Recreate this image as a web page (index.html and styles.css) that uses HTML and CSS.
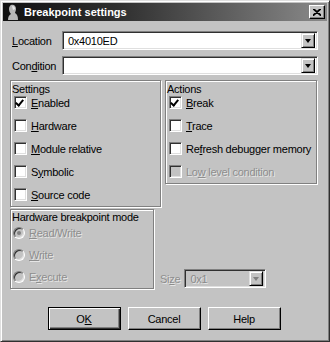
FILE: index.html
```html
<!DOCTYPE html>
<html>
  <head>
    <title>Breakpoint settings</title>
    <link rel="stylesheet" href="styles.css">
  </head>
  <body>
    <div class="window">
      <div class="titlebar">
        <svg class="app-icon" width="14" height="16" viewBox="0 0 14 16">
          <path d="M5 1 C8 0 10 2 10 5 C10 7 9 8 9 9 C11 10 12 12 12 16 L2 16 C2 13 3 11 5 10 C4 9 3 7 3 5 C3 3 4 1.5 5 1 Z" fill="#b8b8b8"/>
          <path d="M6 2 C8 2 9 3 9 5 L7 6 Z" fill="#e8e8e8"/>
        </svg>
        <span class="title">Breakpoint settings</span>
        <span class="close">
          <svg width="8" height="7" viewBox="0 0 8 7">
            <path d="M0 0 L8 7 M1 0 L8 6 M8 0 L0 7 M7 0 L0 6" stroke="#000" stroke-width="1.2"/>
          </svg>
        </span>
      </div>

      <div class="content">
        <div class="field-row">
          <span class="field-label"><u>L</u>ocation</span>
          <div class="combo">
            <span class="combo-text">0x4010ED</span>
            <span class="combo-btn"><span class="arrow"></span></span>
          </div>
        </div>
        <div class="field-row">
          <span class="field-label">Con<u>d</u>ition</span>
          <div class="combo">
            <span class="combo-text"></span>
            <span class="combo-btn"><span class="arrow"></span></span>
          </div>
        </div>

        <div class="groups">
          <div class="group settings">
            <div class="group-title">Settings</div>
            <div class="check-row"><span class="box checked"></span><span><u>E</u>nabled</span></div>
            <div class="check-row"><span class="box"></span><span><u>H</u>ardware</span></div>
            <div class="check-row"><span class="box"></span><span><u>M</u>odule relative</span></div>
            <div class="check-row"><span class="box"></span><span>S<u>y</u>mbolic</span></div>
            <div class="check-row"><span class="box"></span><span><u>S</u>ource code</span></div>
          </div>
          <div class="group actions">
            <div class="group-title">Actions</div>
            <div class="check-row"><span class="box checked"></span><span><u>B</u>reak</span></div>
            <div class="check-row"><span class="box"></span><span><u>T</u>race</span></div>
            <div class="check-row"><span class="box"></span><span>Re<u>f</u>resh debugger memory</span></div>
            <div class="check-row disabled"><span class="box"></span><span>Lo<u>w</u> level condition</span></div>
          </div>
        </div>

        <div class="lower">
          <div class="group hw">
            <div class="group-title">Hardware breakpoint mode</div>
            <div class="check-row disabled"><span class="radio on"></span><span><u>R</u>ead/Write</span></div>
            <div class="check-row disabled"><span class="radio"></span><span><u>W</u>rite</span></div>
            <div class="check-row disabled"><span class="radio"></span><span>E<u>x</u>ecute</span></div>
          </div>
          <div class="size-row">
            <span class="size-label">Si<u>z</u>e</span>
            <div class="combo small disabled">
              <span class="combo-text">0x1</span>
              <span class="combo-btn"><span class="arrow"></span></span>
            </div>
          </div>
        </div>

        <div class="buttons">
          <span class="btn default">O<u>K</u></span>
          <span class="btn">Cancel</span>
          <span class="btn">Help</span>
        </div>
      </div>
    </div>
  </body>
</html>
```

FILE: styles.css
```css
body {
    margin: 0;
    font-family: "Liberation Sans", Arial, sans-serif;
    font-size: 11px;
    letter-spacing: -0.25px;
    color: #000;
    background: #c3c3c3;
}
/* outer frame of the dialog */
.window {
    width: 330px;
    height: 342px;
    box-sizing: border-box;
    border: 1px solid;
    border-color: #dfdfdf #303030 #303030 #dfdfdf;
    box-shadow: inset 1px 1px #fff, inset -1px -1px #808080;
    padding: 2px;
    background: #c3c3c3;
}
.titlebar {
    height: 18px;
    display: flex;
    align-items: center;
    background: linear-gradient(to right, #111, #2e2e2e 35%, #8a8a8a);
    padding: 0 2px 0 3px;
}
.app-icon {
    margin-right: 4px;
}
.title {
    color: #fff;
    font-weight: bold;
    font-size: 11px;
    letter-spacing: 0;
    flex: 1;
}
.close {
    width: 16px;
    height: 14px;
    box-sizing: border-box;
    background: #c3c3c3;
    border: 1px solid;
    border-color: #fff #000 #000 #fff;
    box-shadow: inset -1px -1px #808080;
    display: flex;
    align-items: center;
    justify-content: center;
}
.content {
    padding: 10px 9px 0 7px;
}
.field-row {
    display: flex;
    align-items: center;
    margin-bottom: 6px;
}
.field-label {
    width: 50px;
    padding-left: 2px;
}
/* sunken combo box */
.combo {
    flex: 1;
    height: 19px;
    box-sizing: border-box;
    background: #fff;
    border: 1px solid;
    border-color: #808080 #fff #fff #808080;
    box-shadow: inset 1px 1px #303030, inset -1px -1px #dfdfdf;
    display: flex;
    align-items: center;
    padding: 2px 2px 2px 5px;
}
.combo-text {
    flex: 1;
}
.combo-btn {
    width: 14px;
    height: 15px;
    box-sizing: border-box;
    background: #c3c3c3;
    border: 1px solid;
    border-color: #dfdfdf #000 #000 #dfdfdf;
    box-shadow: inset 1px 1px #fff, inset -1px -1px #808080;
    display: flex;
    align-items: center;
    justify-content: center;
}
.arrow {
    width: 0;
    height: 0;
    border-left: 3px solid transparent;
    border-right: 3px solid transparent;
    border-top: 4px solid #000;
    margin-top: 1px;
}
.combo.small {
    flex: none;
    width: 82px;
}
.combo.disabled {
    background: #c3c3c3;
    color: #8a8a8a;
}
.combo.disabled .arrow {
    border-top-color: #808080;
}
.groups {
    display: flex;
    align-items: flex-start;
    gap: 4px;
    margin-top: -1px;
}
/* etched group frame */
.group {
    box-sizing: border-box;
    border: 1px solid #808080;
    box-shadow: inset 1px 1px #fff, 1px 1px #fff;
    padding: 2px 2px 0 1px;
}
.settings {
    width: 151px;
    height: 127px;
}
.actions {
    width: 152px;
    height: 104px;
}
.group-title {
    line-height: 13px;
}
.check-row {
    display: flex;
    align-items: center;
    height: 13px;
    margin-top: 10px;
    padding-left: 2px;
    gap: 4px;
    white-space: nowrap;
}
.group-title + .check-row {
    margin-top: 0;
}
.box {
    width: 13px;
    height: 13px;
    box-sizing: border-box;
    background: #fff;
    border: 1px solid;
    border-color: #808080 #fff #fff #808080;
    box-shadow: inset 1px 1px #303030, inset -1px -1px #dfdfdf;
    position: relative;
}
.box.checked::after {
    content: "";
    position: absolute;
    left: 2px;
    top: 1px;
    width: 3px;
    height: 6px;
    border: solid #000;
    border-width: 0 2px 2px 0;
    transform: rotate(40deg);
}
.disabled {
    color: #8e8e8e;
    text-shadow: 1px 1px #e6e6e6;
}
.disabled .box {
    background: #c3c3c3;
}
.lower {
    display: flex;
    align-items: flex-end;
    margin-top: 2px;
}
.hw {
    width: 144px;
    height: 80px;
    padding-top: 1px;
}
.hw .check-row {
    margin-top: 9px;
}
.hw .group-title + .check-row {
    margin-top: 2px;
}
.radio {
    width: 12px;
    height: 12px;
    box-sizing: border-box;
    border-radius: 50%;
    background: #c3c3c3;
    border: 1px solid;
    border-color: #808080 #fff #fff #808080;
    box-shadow: inset 1px 1px #303030, inset -1px -1px #dfdfdf;
    display: flex;
    align-items: center;
    justify-content: center;
    margin-left: -1px;
}
.radio.on::after {
    content: "";
    width: 4px;
    height: 4px;
    border-radius: 50%;
    background: #808080;
}
.size-row {
    display: flex;
    align-items: center;
    margin-left: 6px;
    margin-bottom: 1px;
    gap: 4px;
}
.size-label {
    color: #8e8e8e;
    text-shadow: 1px 1px #e6e6e6;
}
.buttons {
    display: flex;
    justify-content: center;
    gap: 7px;
    margin-top: 18px;
}
.btn {
    width: 73px;
    height: 23px;
    box-sizing: border-box;
    border: 1px solid;
    border-color: #fff #000 #000 #fff;
    box-shadow: inset -1px -1px #808080;
    display: flex;
    align-items: center;
    justify-content: center;
}
.btn.default {
    border: 1px solid #000;
    box-shadow: inset 1px 1px #fff, inset -1px -1px #303030, inset -2px -2px #808080;
}
```
